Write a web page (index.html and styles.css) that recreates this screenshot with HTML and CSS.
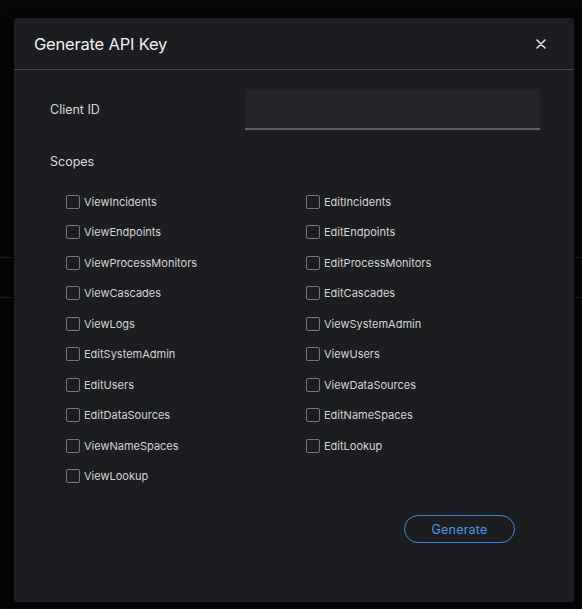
FILE: index.html
```html
<!DOCTYPE html>
<html>
<head>
<meta charset="utf-8">
<link rel="stylesheet" href="styles.css">
</head>
<body>
<div class="page">
  <div class="page-top"></div>
  <div class="page-row"></div>
  <div class="page-row"></div>
  <div class="page-empty">No data</div>
</div>
<div class="backdrop"></div>
<div class="modal">
  <div class="modal-header">
    <h1 class="modal-title">Generate API Key</h1>
    <button class="close-btn" aria-label="Close">
      <svg width="10" height="10" viewBox="0 0 10 10"><path d="M1 1L9 9M9 1L1 9" stroke="#e6e6e6" stroke-width="1.5" stroke-linecap="round"/></svg>
    </button>
  </div>
  <div class="modal-body">
    <div class="field-row">
      <label class="field-label">Client ID</label>
      <input class="text-input" type="text">
    </div>
    <div class="scopes-label">Scopes</div>
    <div class="scopes-grid">
      <label class="scope"><span class="box"></span>ViewIncidents</label>
      <label class="scope"><span class="box"></span>EditIncidents</label>
      <label class="scope"><span class="box"></span>ViewEndpoints</label>
      <label class="scope"><span class="box"></span>EditEndpoints</label>
      <label class="scope"><span class="box"></span>ViewProcessMonitors</label>
      <label class="scope"><span class="box"></span>EditProcessMonitors</label>
      <label class="scope"><span class="box"></span>ViewCascades</label>
      <label class="scope"><span class="box"></span>EditCascades</label>
      <label class="scope"><span class="box"></span>ViewLogs</label>
      <label class="scope"><span class="box"></span>ViewSystemAdmin</label>
      <label class="scope"><span class="box"></span>EditSystemAdmin</label>
      <label class="scope"><span class="box"></span>ViewUsers</label>
      <label class="scope"><span class="box"></span>EditUsers</label>
      <label class="scope"><span class="box"></span>ViewDataSources</label>
      <label class="scope"><span class="box"></span>EditDataSources</label>
      <label class="scope"><span class="box"></span>EditNameSpaces</label>
      <label class="scope"><span class="box"></span>ViewNameSpaces</label>
      <label class="scope"><span class="box"></span>EditLookup</label>
      <label class="scope"><span class="box"></span>ViewLookup</label>
    </div>
    <div class="actions">
      <button class="generate-btn">Generate</button>
    </div>
  </div>
</div>
</body>
</html>
```

FILE: styles.css
```css
html, body {
  margin: 0;
  padding: 0;
  background: #0d0e10;
  font-family: "Inter", "Noto Sans", sans-serif;
  width: 582px;
  height: 609px;
  overflow: hidden;
}
.page {
  display: flex;
  flex-direction: column;
  height: 609px;
  overflow: hidden;
}
.page-top {
  height: 257px;
  flex: none;
}
.page-row {
  height: 39px;
  flex: none;
  border-top: 1px solid #3a3d42;
}
.page-empty {
  margin-top: 306px;
  padding-left: 362px;
  font-size: 12px;
  line-height: 14px;
  color: #aaa;
}
.backdrop {
  position: absolute;
  inset: 0;
  background: rgba(0, 0, 0, 0.55);
}
.modal {
  position: absolute;
  left: 14px;
  top: 18px;
  width: 560px;
  height: 584px;
  background: #1b1d21;
  border-radius: 3px;
  box-shadow: 0 0 6px rgba(0,0,0,0.6);
  display: flex;
  flex-direction: column;
  color: #e0e0e0;
}
.modal-header {
  height: 51px;
  flex: none;
  border-bottom: 1px solid #44474b;
  display: flex;
  align-items: center;
  justify-content: space-between;
  padding: 0 28px 0 20px;
}
.modal-title {
  margin: 0;
  font-size: 16.5px;
  font-weight: 400;
  color: #f0f0f0;
  letter-spacing: -0.2px;
}
.close-btn {
  background: none;
  border: none;
  padding: 0;
  width: 10px;
  height: 10px;
  display: flex;
}
.modal-body {
  padding: 19px 34px 0 36px;
  display: flex;
  flex-direction: column;
}
.field-row {
  display: flex;
  align-items: center;
  height: 41px;
}
.field-label {
  width: 195px;
  font-size: 12.5px;
  color: #d8d8d8;
}
.text-input {
  flex: 1;
  height: 41px;
  box-sizing: border-box;
  background: #222428;
  border: none;
  border-bottom: 2px solid #5c5f63;
  border-radius: 2px 2px 0 0;
  outline: none;
}
.scopes-label {
  margin-top: 24px;
  font-size: 12.5px;
  color: #d8d8d8;
  line-height: 16px;
}
.scopes-grid {
  margin-top: 24px;
  padding-left: 16px;
  display: grid;
  grid-template-columns: 240px 1fr;
  grid-auto-rows: 30.45px;
}
.scope {
  display: flex;
  align-items: center;
  font-size: 11px;
  color: #d4d4d4;
  height: 16px;
}
.box {
  width: 12px;
  height: 12px;
  border: 1px solid #74777b;
  border-radius: 2px;
  margin-right: 4px;
  box-sizing: content-box;
  flex: none;
}
.actions {
  display: flex;
  justify-content: flex-end;
  margin-top: 17px;
  padding-right: 25px;
}
.generate-btn {
  width: 111px;
  height: 28px;
  border: 1px solid #3a86d6;
  border-radius: 14px;
  background: transparent;
  color: #4a9ae8;
  font-family: "Inter", "Noto Sans", sans-serif;
  font-size: 12.5px;
  letter-spacing: 0.2px;
}
```
